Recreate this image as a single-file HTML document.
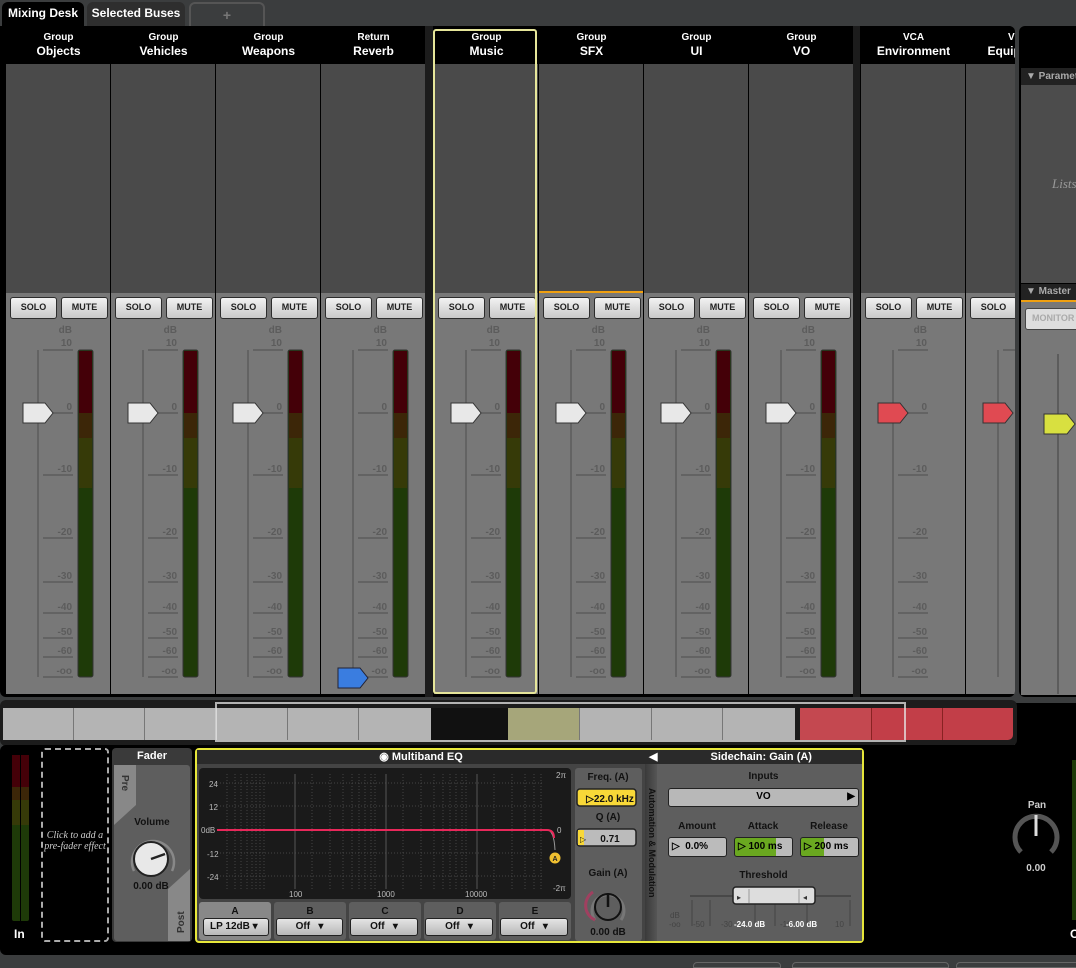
<!DOCTYPE html>
<html><head><meta charset="utf-8"><style>
*{box-sizing:border-box;margin:0;padding:0}
body{width:1076px;height:965px;background:#3b3d3e;font-family:"Liberation Sans",sans-serif;position:relative;overflow:hidden}
.abs{position:absolute}
.tab{position:absolute;top:2px;height:24px;border-radius:6px 6px 0 0;color:#fff;font-size:12px;font-weight:bold;text-align:center;line-height:22px}
.desk{position:absolute;left:0;top:26px;width:1015px;height:671px;background:#000;overflow:hidden;border-radius:0 6px 6px 6px}
.strip{position:absolute;top:0;width:105px;height:668px;border-left:1px solid #000;overflow:hidden}
.hd{position:absolute;left:0;top:0;width:105px;height:38px;background:#000;color:#fff;text-align:center;font-weight:bold;white-space:nowrap}
.hd .t{font-size:10px;padding-top:6px;line-height:11px}
.hd .n{font-size:12px;line-height:17px}
.up{position:absolute;left:0;top:38px;width:105px;height:229px;background:#4a4a4a}
.lo{position:absolute;left:0;top:267px;width:105px;height:401px;background:#787878}
.btn{position:absolute;top:4px;width:47px;height:22px;border:1.5px solid #2c2c2c;border-radius:3px;background:linear-gradient(#f2f2f2,#c9c9c9);font-size:9px;font-weight:bold;color:#222;text-align:center;line-height:19px}
.sc{position:absolute;left:0;top:23px}
.gap{position:absolute;top:0;height:671px;background:#1c1c1c}
.sel{position:absolute;border:2px solid #e6e69a;border-radius:3px}
.cell{position:absolute;top:8px;height:32px;border-right:1px solid #777}
.lbl{color:#111;font-weight:bold;font-size:10px;text-align:center}
.dd{position:absolute;height:18px;border:1.5px solid #222;border-radius:3px;background:linear-gradient(#e4e4e4,#b8b8b8);font-size:10px;font-weight:bold;color:#111;line-height:15px;text-align:center}
</style></head><body>

<div class="tab" style="left:2px;width:82px;background:#000">Mixing Desk</div>
<div class="tab" style="left:87px;width:98px;background:#2e2e2e">Selected Buses</div>
<div class="tab" style="left:189px;width:76px;border:2px solid #555;border-bottom:none;color:#777;font-size:14px">+</div>

<div class="desk">
 <div class="gap" style="left:425px;width:8px"></div>
 <div class="gap" style="left:853px;width:7px"></div>

 <div class="strip" style="left:5px"><div class="hd"><div class="t">Group</div><div class="n">Objects</div></div><div class="up"></div><div class="lo"><div class="btn" style="left:4px">SOLO</div><div class="btn" style="left:55px">MUTE</div></div>
 <svg class="sc" width="105" height="400" style="top:264px"><g fill="#5c5c5c" font-size="10" font-weight="bold" font-family="Liberation Sans" text-anchor="end"><text x="66" y="43">dB</text><text x="66" y="56">10</text><text x="66" y="120">0</text><text x="66" y="182">-10</text><text x="66" y="245">-20</text><text x="66" y="289">-30</text><text x="66" y="320">-40</text><text x="66" y="345">-50</text><text x="66" y="364">-60</text><text x="66" y="384">-oo</text></g><g stroke="#5c5c5c" stroke-width="1.5"><line x1="32" y1="60" x2="32" y2="387"/><path d="M37 60H67M37 123H67M37 185H67M37 248H67M37 292H67M37 323H67M37 348H67M37 367H67M37 387H67"/></g><rect x="72" y="60" width="15" height="327" rx="2" fill="#1e3a08" stroke="#333"/><rect x="73" y="61" width="13" height="62" fill="#440008"/><rect x="73" y="123" width="13" height="25" fill="#3c2608"/><rect x="73" y="148" width="13" height="50" fill="#363a08"/><path d="M17 113H39L47 123L39 133H17Z" fill="#e8e8e8" stroke="#333"/></svg></div>

 <div class="strip" style="left:110px"><div class="hd"><div class="t">Group</div><div class="n">Vehicles</div></div><div class="up"></div><div class="lo"><div class="btn" style="left:4px">SOLO</div><div class="btn" style="left:55px">MUTE</div></div>
 <svg class="sc" width="105" height="400" style="top:264px"><g fill="#5c5c5c" font-size="10" font-weight="bold" font-family="Liberation Sans" text-anchor="end"><text x="66" y="43">dB</text><text x="66" y="56">10</text><text x="66" y="120">0</text><text x="66" y="182">-10</text><text x="66" y="245">-20</text><text x="66" y="289">-30</text><text x="66" y="320">-40</text><text x="66" y="345">-50</text><text x="66" y="364">-60</text><text x="66" y="384">-oo</text></g><g stroke="#5c5c5c" stroke-width="1.5"><line x1="32" y1="60" x2="32" y2="387"/><path d="M37 60H67M37 123H67M37 185H67M37 248H67M37 292H67M37 323H67M37 348H67M37 367H67M37 387H67"/></g><rect x="72" y="60" width="15" height="327" rx="2" fill="#1e3a08" stroke="#333"/><rect x="73" y="61" width="13" height="62" fill="#440008"/><rect x="73" y="123" width="13" height="25" fill="#3c2608"/><rect x="73" y="148" width="13" height="50" fill="#363a08"/><path d="M17 113H39L47 123L39 133H17Z" fill="#e8e8e8" stroke="#333"/></svg></div>

 <div class="strip" style="left:215px"><div class="hd"><div class="t">Group</div><div class="n">Weapons</div></div><div class="up"></div><div class="lo"><div class="btn" style="left:4px">SOLO</div><div class="btn" style="left:55px">MUTE</div></div>
 <svg class="sc" width="105" height="400" style="top:264px"><g fill="#5c5c5c" font-size="10" font-weight="bold" font-family="Liberation Sans" text-anchor="end"><text x="66" y="43">dB</text><text x="66" y="56">10</text><text x="66" y="120">0</text><text x="66" y="182">-10</text><text x="66" y="245">-20</text><text x="66" y="289">-30</text><text x="66" y="320">-40</text><text x="66" y="345">-50</text><text x="66" y="364">-60</text><text x="66" y="384">-oo</text></g><g stroke="#5c5c5c" stroke-width="1.5"><line x1="32" y1="60" x2="32" y2="387"/><path d="M37 60H67M37 123H67M37 185H67M37 248H67M37 292H67M37 323H67M37 348H67M37 367H67M37 387H67"/></g><rect x="72" y="60" width="15" height="327" rx="2" fill="#1e3a08" stroke="#333"/><rect x="73" y="61" width="13" height="62" fill="#440008"/><rect x="73" y="123" width="13" height="25" fill="#3c2608"/><rect x="73" y="148" width="13" height="50" fill="#363a08"/><path d="M17 113H39L47 123L39 133H17Z" fill="#e8e8e8" stroke="#333"/></svg></div>

 <div class="strip" style="left:320px"><div class="hd"><div class="t">Return</div><div class="n">Reverb</div></div><div class="up"></div><div class="lo"><div class="btn" style="left:4px">SOLO</div><div class="btn" style="left:55px">MUTE</div></div>
 <svg class="sc" width="105" height="400" style="top:264px"><g fill="#5c5c5c" font-size="10" font-weight="bold" font-family="Liberation Sans" text-anchor="end"><text x="66" y="43">dB</text><text x="66" y="56">10</text><text x="66" y="120">0</text><text x="66" y="182">-10</text><text x="66" y="245">-20</text><text x="66" y="289">-30</text><text x="66" y="320">-40</text><text x="66" y="345">-50</text><text x="66" y="364">-60</text><text x="66" y="384">-oo</text></g><g stroke="#5c5c5c" stroke-width="1.5"><line x1="32" y1="60" x2="32" y2="387"/><path d="M37 60H67M37 123H67M37 185H67M37 248H67M37 292H67M37 323H67M37 348H67M37 367H67M37 387H67"/></g><rect x="72" y="60" width="15" height="327" rx="2" fill="#1e3a08" stroke="#333"/><rect x="73" y="61" width="13" height="62" fill="#440008"/><rect x="73" y="123" width="13" height="25" fill="#3c2608"/><rect x="73" y="148" width="13" height="50" fill="#363a08"/><path d="M17 378H39L47 388L39 398H17Z" fill="#3a7de0" stroke="#223"/></svg></div>

 <div class="strip" style="left:433px"><div class="hd"><div class="t">Group</div><div class="n">Music</div></div><div class="up"></div><div class="lo"><div class="btn" style="left:4px">SOLO</div><div class="btn" style="left:55px">MUTE</div></div>
 <svg class="sc" width="105" height="400" style="top:264px"><g fill="#5c5c5c" font-size="10" font-weight="bold" font-family="Liberation Sans" text-anchor="end"><text x="66" y="43">dB</text><text x="66" y="56">10</text><text x="66" y="120">0</text><text x="66" y="182">-10</text><text x="66" y="245">-20</text><text x="66" y="289">-30</text><text x="66" y="320">-40</text><text x="66" y="345">-50</text><text x="66" y="364">-60</text><text x="66" y="384">-oo</text></g><g stroke="#5c5c5c" stroke-width="1.5"><line x1="32" y1="60" x2="32" y2="387"/><path d="M37 60H67M37 123H67M37 185H67M37 248H67M37 292H67M37 323H67M37 348H67M37 367H67M37 387H67"/></g><rect x="72" y="60" width="15" height="327" rx="2" fill="#1e3a08" stroke="#333"/><rect x="73" y="61" width="13" height="62" fill="#440008"/><rect x="73" y="123" width="13" height="25" fill="#3c2608"/><rect x="73" y="148" width="13" height="50" fill="#363a08"/><path d="M17 113H39L47 123L39 133H17Z" fill="#e8e8e8" stroke="#333"/></svg></div>

 <div class="strip" style="left:538px"><div class="hd"><div class="t">Group</div><div class="n">SFX</div></div><div class="up"></div><div class="abs" style="left:0;top:265px;width:105px;height:2px;background:#f0a010"></div><div class="lo"><div class="btn" style="left:4px">SOLO</div><div class="btn" style="left:55px">MUTE</div></div>
 <svg class="sc" width="105" height="400" style="top:264px"><g fill="#5c5c5c" font-size="10" font-weight="bold" font-family="Liberation Sans" text-anchor="end"><text x="66" y="43">dB</text><text x="66" y="56">10</text><text x="66" y="120">0</text><text x="66" y="182">-10</text><text x="66" y="245">-20</text><text x="66" y="289">-30</text><text x="66" y="320">-40</text><text x="66" y="345">-50</text><text x="66" y="364">-60</text><text x="66" y="384">-oo</text></g><g stroke="#5c5c5c" stroke-width="1.5"><line x1="32" y1="60" x2="32" y2="387"/><path d="M37 60H67M37 123H67M37 185H67M37 248H67M37 292H67M37 323H67M37 348H67M37 367H67M37 387H67"/></g><rect x="72" y="60" width="15" height="327" rx="2" fill="#1e3a08" stroke="#333"/><rect x="73" y="61" width="13" height="62" fill="#440008"/><rect x="73" y="123" width="13" height="25" fill="#3c2608"/><rect x="73" y="148" width="13" height="50" fill="#363a08"/><path d="M17 113H39L47 123L39 133H17Z" fill="#e8e8e8" stroke="#333"/></svg></div>

 <div class="strip" style="left:643px"><div class="hd"><div class="t">Group</div><div class="n">UI</div></div><div class="up"></div><div class="lo"><div class="btn" style="left:4px">SOLO</div><div class="btn" style="left:55px">MUTE</div></div>
 <svg class="sc" width="105" height="400" style="top:264px"><g fill="#5c5c5c" font-size="10" font-weight="bold" font-family="Liberation Sans" text-anchor="end"><text x="66" y="43">dB</text><text x="66" y="56">10</text><text x="66" y="120">0</text><text x="66" y="182">-10</text><text x="66" y="245">-20</text><text x="66" y="289">-30</text><text x="66" y="320">-40</text><text x="66" y="345">-50</text><text x="66" y="364">-60</text><text x="66" y="384">-oo</text></g><g stroke="#5c5c5c" stroke-width="1.5"><line x1="32" y1="60" x2="32" y2="387"/><path d="M37 60H67M37 123H67M37 185H67M37 248H67M37 292H67M37 323H67M37 348H67M37 367H67M37 387H67"/></g><rect x="72" y="60" width="15" height="327" rx="2" fill="#1e3a08" stroke="#333"/><rect x="73" y="61" width="13" height="62" fill="#440008"/><rect x="73" y="123" width="13" height="25" fill="#3c2608"/><rect x="73" y="148" width="13" height="50" fill="#363a08"/><path d="M17 113H39L47 123L39 133H17Z" fill="#e8e8e8" stroke="#333"/></svg></div>

 <div class="strip" style="left:748px"><div class="hd"><div class="t">Group</div><div class="n">VO</div></div><div class="up"></div><div class="lo"><div class="btn" style="left:4px">SOLO</div><div class="btn" style="left:55px">MUTE</div></div>
 <svg class="sc" width="105" height="400" style="top:264px"><g fill="#5c5c5c" font-size="10" font-weight="bold" font-family="Liberation Sans" text-anchor="end"><text x="66" y="43">dB</text><text x="66" y="56">10</text><text x="66" y="120">0</text><text x="66" y="182">-10</text><text x="66" y="245">-20</text><text x="66" y="289">-30</text><text x="66" y="320">-40</text><text x="66" y="345">-50</text><text x="66" y="364">-60</text><text x="66" y="384">-oo</text></g><g stroke="#5c5c5c" stroke-width="1.5"><line x1="32" y1="60" x2="32" y2="387"/><path d="M37 60H67M37 123H67M37 185H67M37 248H67M37 292H67M37 323H67M37 348H67M37 367H67M37 387H67"/></g><rect x="72" y="60" width="15" height="327" rx="2" fill="#1e3a08" stroke="#333"/><rect x="73" y="61" width="13" height="62" fill="#440008"/><rect x="73" y="123" width="13" height="25" fill="#3c2608"/><rect x="73" y="148" width="13" height="50" fill="#363a08"/><path d="M17 113H39L47 123L39 133H17Z" fill="#e8e8e8" stroke="#333"/></svg></div>

 <div class="strip" style="left:860px"><div class="hd"><div class="t">VCA</div><div class="n">Environment</div></div><div class="up"></div><div class="lo"><div class="btn" style="left:4px">SOLO</div><div class="btn" style="left:55px">MUTE</div></div>
 <svg class="sc" width="105" height="400" style="top:264px"><g fill="#5c5c5c" font-size="10" font-weight="bold" font-family="Liberation Sans" text-anchor="end"><text x="66" y="43">dB</text><text x="66" y="56">10</text><text x="66" y="120">0</text><text x="66" y="182">-10</text><text x="66" y="245">-20</text><text x="66" y="289">-30</text><text x="66" y="320">-40</text><text x="66" y="345">-50</text><text x="66" y="364">-60</text><text x="66" y="384">-oo</text></g><g stroke="#5c5c5c" stroke-width="1.5"><line x1="32" y1="60" x2="32" y2="387"/><path d="M37 60H67M37 123H67M37 185H67M37 248H67M37 292H67M37 323H67M37 348H67M37 367H67M37 387H67"/></g><path d="M17 113H39L47 123L39 133H17Z" fill="#e04a52" stroke="#333"/></svg></div>

 <div class="strip" style="left:965px"><div class="hd"><div class="t">VCA</div><div class="n">Equipment</div></div><div class="up"></div><div class="lo"><div class="btn" style="left:4px">SOLO</div><div class="btn" style="left:55px">MUTE</div></div>
 <svg class="sc" width="105" height="400" style="top:264px"><g stroke="#5c5c5c" stroke-width="1.5"><line x1="32" y1="60" x2="32" y2="387"/><path d="M37 60H67"/></g><path d="M17 113H39L47 123L39 133H17Z" fill="#e04a52" stroke="#333"/></svg></div>

 <div class="sel" style="left:433px;top:3px;width:104px;height:665px"></div>
</div>

<!-- right panel -->
<div class="abs" style="left:1019px;top:26px;width:60px;height:671px;background:#000;border-radius:6px 0 0 6px;overflow:hidden;white-space:nowrap">
 <div class="abs" style="left:2px;top:42px;width:60px;height:17px;background:#222;color:#aaa;font-size:10px;font-weight:bold;line-height:17px;padding-left:5px">▼ Parameters</div>
 <div class="abs" style="left:2px;top:59px;width:60px;height:198px;background:#4c4c4c;color:#999;font-family:'Liberation Serif',serif;font-style:italic;font-size:13px;line-height:198px;padding-left:31px">Lists</div>
 <div class="abs" style="left:2px;top:258px;width:60px;height:16px;background:#222;color:#aaa;font-size:10px;font-weight:bold;line-height:16px;padding-left:5px">▼ Master</div>
 <div class="abs" style="left:2px;top:274px;width:60px;height:395px;background:#787878;border-top:2px solid #f0a010">
  <div class="abs" style="left:4px;top:6px;width:60px;height:22px;border:1.5px solid #444;border-radius:3px;background:#ddd;color:#aaa;font-size:9px;font-weight:bold;line-height:19px;padding-left:6px">MONITOR</div>
  <div class="abs" style="left:36px;top:52px;width:2px;height:340px;background:#5c5c5c"></div>
  <svg class="abs" style="left:22px;top:110px" width="40" height="24"><path d="M1 2H24L32 12L24 22H1Z" fill="#d8e040" stroke="#333"/></svg>
 </div>
</div>

<!-- overview -->
<div class="abs" style="left:1015px;top:703px;width:61px;height:44px;background:#000"></div>
<div class="abs" style="left:0;top:700px;width:1017px;height:46px;background:#1c1c1c;border-radius:6px">
 <div class="cell" style="left:3px;width:71px;background:#b4b4b4"></div>
 <div class="cell" style="left:74px;width:71px;background:#b4b4b4"></div>
 <div class="cell" style="left:145px;width:71px;background:#b4b4b4"></div>
 <div class="cell" style="left:216px;width:72px;background:#b4b4b4"></div>
 <div class="cell" style="left:288px;width:71px;background:#b4b4b4"></div>
 <div class="cell" style="left:359px;width:72px;background:#b4b4b4;border:none"></div>
 <div class="cell" style="left:431px;width:77px;background:#111;border:none"></div>
 <div class="cell" style="left:508px;width:72px;background:#a6a67a"></div>
 <div class="cell" style="left:580px;width:72px;background:#b4b4b4"></div>
 <div class="cell" style="left:652px;width:71px;background:#b4b4b4"></div>
 <div class="cell" style="left:723px;width:72px;background:#b4b4b4;border:none"></div>
 <div class="cell" style="left:800px;width:72px;background:#c44850;border-right:1px solid #822"></div>
 <div class="cell" style="left:872px;width:71px;background:#c23e48;border-right:1px solid #822"></div>
 <div class="cell" style="left:943px;width:70px;background:#c23e48;border:none;border-radius:0 0 5px 0"></div>
 <div class="abs" style="left:215px;top:2px;width:691px;height:40px;border:2px solid rgba(230,230,230,.75)"></div>
</div>

<!-- bottom -->
<div class="abs" style="left:0;top:745px;width:1076px;height:210px;background:#000;border-radius:6px 0 0 6px"></div>
<div class="abs" style="left:12px;top:755px;width:17px;height:166px;background:#1e3a08;border-radius:2px"></div>
<div class="abs" style="left:12px;top:755px;width:17px;height:32px;background:#440008"></div>
<div class="abs" style="left:12px;top:787px;width:17px;height:13px;background:#3c2608"></div>
<div class="abs" style="left:12px;top:800px;width:17px;height:25px;background:#363a08"></div>
<div class="abs" style="left:20px;top:755px;width:1px;height:166px;background:#000"></div>
<div class="abs" style="left:14px;top:927px;color:#fff;font-size:12px;font-weight:bold">In</div>
<div class="abs" style="left:41px;top:748px;width:68px;height:194px;border:2px dashed #aaa;border-radius:4px;color:#ccc;font-family:'Liberation Serif',serif;font-style:italic;font-size:10px;text-align:center;padding-top:80px;line-height:11px">Click to add a pre-fader effect</div>

<div class="abs" style="left:112px;top:748px;width:80px;height:194px;background:#3a3a3a;border-radius:4px">
 <div style="color:#fff;font-weight:bold;font-size:11px;text-align:center;line-height:17px">Fader</div>
 <div class="abs" style="left:2px;top:17px;width:76px;height:176px;background:#5e5e5e;border-radius:3px"></div>
 <svg class="abs" style="left:2px;top:17px" width="76" height="176"><path d="M0 0H22V40L0 60Z" fill="#888"/><path d="M76 104V176H54V124Z" fill="#888"/><text transform="translate(8,10) rotate(90)" font-size="10" font-weight="bold" fill="#333" font-family="Liberation Sans">Pre</text><text transform="translate(70,168) rotate(-90)" font-size="10" font-weight="bold" fill="#333" font-family="Liberation Sans">Post</text><text x="38" y="60" text-anchor="middle" font-size="10" font-weight="bold" fill="#111" font-family="Liberation Sans">Volume</text><path d="M20 106A21 21 0 1 1 58 106" fill="none" stroke="#888" stroke-width="2.5"/><circle cx="37" cy="94" r="17" fill="#e8e8e8" stroke="#222" stroke-width="2"/><line x1="37" y1="94" x2="51" y2="89" stroke="#222" stroke-width="2.5"/><text x="37" y="124" text-anchor="middle" font-size="10" font-weight="bold" fill="#111" font-family="Liberation Sans">0.00 dB</text></svg>
</div>

<div class="abs" style="left:195px;top:748px;width:669px;height:195px;border:2px solid #e6e63a;border-radius:4px;background:#444"></div>
<div class="abs" style="left:197px;top:750px;width:448px;height:14px;background:#2a2a2a;color:#fff;font-size:11px;font-weight:bold;text-align:center;line-height:14px">◉ Multiband EQ</div>
<div class="abs" style="left:645px;top:750px;width:217px;height:14px;background:#2a2a2a;color:#fff;font-size:11px;font-weight:bold;line-height:14px;padding-left:4px">◀ <span style="padding-left:50px">Sidechain: Gain (A)</span></div>

<svg class="abs" style="left:197px;top:764px" width="448" height="177">
 <rect x="2" y="4" width="372" height="131" rx="4" fill="#1a1a1a"/>
 <g stroke="#444" stroke-dasharray="1 2"><path d="M20 19H345M20 42H345M20 66H345M20 89H345M20 112H345"/>
 <path d="M30 10V125M38 10V125M44 10V125M50 10V125M55 10V125M59 10V125M63 10V125M67 10V125M115 10V125M133 10V125M146 10V125M155 10V125M162 10V125M168 10V125M174 10V125M178 10V125M206 10V125M224 10V125M237 10V125M246 10V125M253 10V125M259 10V125M265 10V125M269 10V125M297 10V125M315 10V125M328 10V125M337 10V125M344 10V125"/></g>
 <path d="M98 10V125M189 10V125M280 10V125" stroke="#555"/>
 <g fill="#bbb" font-size="8" font-family="Liberation Sans"><text x="12" y="23">24</text><text x="12" y="46">12</text><text x="4" y="69">0dB</text><text x="10" y="93">-12</text><text x="10" y="116">-24</text><text x="92" y="133">100</text><text x="180" y="133">1000</text><text x="268" y="133">10000</text><text x="359" y="14">2π</text><text x="360" y="69">0</text><text x="356" y="127">-2π</text></g>
 <path d="M20 66H350Q357 66 358 86" fill="none" stroke="#999" stroke-width="1"/>
 <path d="M20 66H350Q357 66 357 74" fill="none" stroke="#e8285a" stroke-width="2"/>
 <circle cx="358" cy="94" r="5.5" fill="#f0c030"/><text x="358" y="97" text-anchor="middle" font-size="7" font-weight="bold" fill="#222" font-family="Liberation Sans">A</text>
 <rect x="2" y="138" width="72" height="38" rx="3" fill="#888"/>
 <rect x="77" y="138" width="72" height="38" rx="3" fill="#5e5e5e"/><rect x="152" y="138" width="72" height="38" rx="3" fill="#5e5e5e"/><rect x="227" y="138" width="72" height="38" rx="3" fill="#5e5e5e"/><rect x="302" y="138" width="72" height="38" rx="3" fill="#5e5e5e"/>
 <g font-size="10" font-weight="bold" fill="#111" font-family="Liberation Sans" text-anchor="middle"><text x="38" y="150">A</text><text x="113" y="150">B</text><text x="188" y="150">C</text><text x="263" y="150">D</text><text x="338" y="150">E</text></g>
 <rect x="378" y="4" width="67" height="173" rx="3" fill="#5e5e5e"/>
 <g font-size="10" font-weight="bold" fill="#111" font-family="Liberation Sans" text-anchor="middle"><text x="411" y="16">Freq. (A)</text><text x="411" y="56">Q (A)</text><text x="411" y="112">Gain (A)</text><text x="411" y="171">0.00 dB</text></g>
 <rect x="380" y="25" width="59" height="17" rx="3" fill="#f8d838" stroke="#222" stroke-width="1.5"/><text x="413" y="38" text-anchor="middle" font-size="10" font-weight="bold" fill="#111" font-family="Liberation Sans">▷22.0 kHz</text>
 <rect x="380" y="65" width="59" height="17" rx="3" fill="#bbb" stroke="#222" stroke-width="1.5"/><rect x="381" y="66" width="6" height="15" fill="#f8d838"/><text x="413" y="78" text-anchor="middle" font-size="10" font-weight="bold" fill="#111" font-family="Liberation Sans">0.71</text><text x="383" y="78" font-size="8" fill="#111">▷</text>
 <path d="M398 156A16 16 0 1 1 424 156" fill="none" stroke="#777" stroke-width="3"/><path d="M398 156A16 16 0 0 1 396 128" fill="none" stroke="#a04060" stroke-width="3"/><circle cx="411" cy="143" r="13" fill="none" stroke="#111" stroke-width="2"/><line x1="411" y1="143" x2="411" y2="129" stroke="#111" stroke-width="2.5"/>
</svg>
<div class="dd" style="left:203px;top:918px;width:66px;text-align:left;padding-left:6px">LP 12dB ▾</div>
<div class="dd" style="left:276px;top:918px;width:67px">Off&nbsp;&nbsp;&nbsp;▾</div>
<div class="dd" style="left:350px;top:918px;width:68px">Off&nbsp;&nbsp;&nbsp;▾</div>
<div class="dd" style="left:425px;top:918px;width:68px">Off&nbsp;&nbsp;&nbsp;▾</div>
<div class="dd" style="left:500px;top:918px;width:68px">Off&nbsp;&nbsp;&nbsp;▾</div>

<div class="abs" style="left:645px;top:764px;width:217px;height:177px;background:#5e5e5e">
 <div class="abs" style="left:0;top:0;width:12px;height:177px;background:linear-gradient(90deg,#3a3a3a,#555)"></div>
 <div class="abs" style="left:0;top:24px;width:14px;color:#111;font-size:9px;font-weight:bold;writing-mode:vertical-rl;line-height:14px">Automation &amp; Modulation</div>
 <div class="abs lbl" style="left:20px;top:7px;width:197px">Inputs</div>
 <div class="abs" style="left:23px;top:24px;width:191px;height:19px;border:1.5px solid #222;border-radius:3px;background:#b8b8b8;font-size:10px;font-weight:bold;text-align:center;line-height:16px">VO<span style="position:absolute;right:3px">▶</span></div>
 <div class="abs lbl" style="left:22px;top:57px;width:60px">Amount</div>
 <div class="abs lbl" style="left:88px;top:57px;width:60px">Attack</div>
 <div class="abs lbl" style="left:154px;top:57px;width:60px">Release</div>
 <div class="abs" style="left:23px;top:73px;width:59px;height:20px;border:1.5px solid #222;border-radius:3px;background:#bbb;font-size:10px;font-weight:bold;line-height:17px;padding-left:3px">▷ &nbsp;0.0%</div>
 <div class="abs" style="left:89px;top:73px;width:59px;height:20px;border:1.5px solid #222;border-radius:3px;background:linear-gradient(90deg,#6aa820 0 72%,#bbb 72%);font-size:10px;font-weight:bold;line-height:17px;padding-left:3px">▷ 100 ms</div>
 <div class="abs" style="left:155px;top:73px;width:59px;height:20px;border:1.5px solid #222;border-radius:3px;background:linear-gradient(90deg,#6aa820 0 40%,#bbb 40%);font-size:10px;font-weight:bold;line-height:17px;padding-left:3px">▷ 200 ms</div>
 <div class="abs lbl" style="left:20px;top:106px;width:197px">Threshold</div>
 <svg class="abs" style="left:20px;top:120px" width="197" height="50"><g stroke="#333"><path d="M25 12H186"/><path d="M27 16V42M45 16V42M90 16V42M110 16V42M142 16V42M185 16V42" stroke="#444"/></g><rect x="68" y="3" width="82" height="17" rx="3" fill="#ddd" stroke="#222" stroke-width="1.5"/><text x="72" y="16" font-size="8" fill="#333">▸</text><text x="138" y="16" font-size="8" fill="#333">◂</text><line x1="84" y1="5" x2="84" y2="19" stroke="#999"/><line x1="134" y1="5" x2="134" y2="19" stroke="#999"/><g font-size="8" fill="#444" font-family="Liberation Sans"><text x="5" y="34">dB</text><text x="4" y="43">-oo</text><text x="28" y="43">-50</text><text x="56" y="43">-30</text><text x="115" y="43">-10</text><text x="170" y="43">10</text></g><g font-size="8" fill="#fff" font-weight="bold" font-family="Liberation Sans"><text x="69" y="43">-24.0 dB</text><text x="121" y="43">-6.00 dB</text></g></svg>
</div>

<div class="abs" style="left:1012px;top:800px;width:50px;color:#ccc;font-size:10px;font-weight:bold;text-align:center">Pan</div>
<svg class="abs" style="left:1010px;top:812px" width="52" height="50"><path d="M11 40A21 21 0 1 1 41 40" fill="none" stroke="#555" stroke-width="5"/><line x1="26" y1="3" x2="26" y2="24" stroke="#ddd" stroke-width="3"/></svg>
<div class="abs" style="left:1012px;top:863px;width:48px;color:#ccc;font-size:10px;font-weight:bold;text-align:center">0.00</div>
<div class="abs" style="left:1070px;top:927px;color:#fff;font-size:12px;font-weight:bold">O</div>
<div class="abs" style="left:1072px;top:760px;width:4px;height:160px;background:#1e3a08"></div>

<div class="abs" style="left:693px;top:962px;width:88px;height:6px;border:1.5px solid #666;border-radius:4px 4px 0 0"></div>
<div class="abs" style="left:792px;top:962px;width:157px;height:6px;border:1.5px solid #666;border-radius:4px 4px 0 0"></div>
<div class="abs" style="left:956px;top:962px;width:130px;height:6px;border:1.5px solid #666;border-radius:4px 4px 0 0"></div>
</body></html>
